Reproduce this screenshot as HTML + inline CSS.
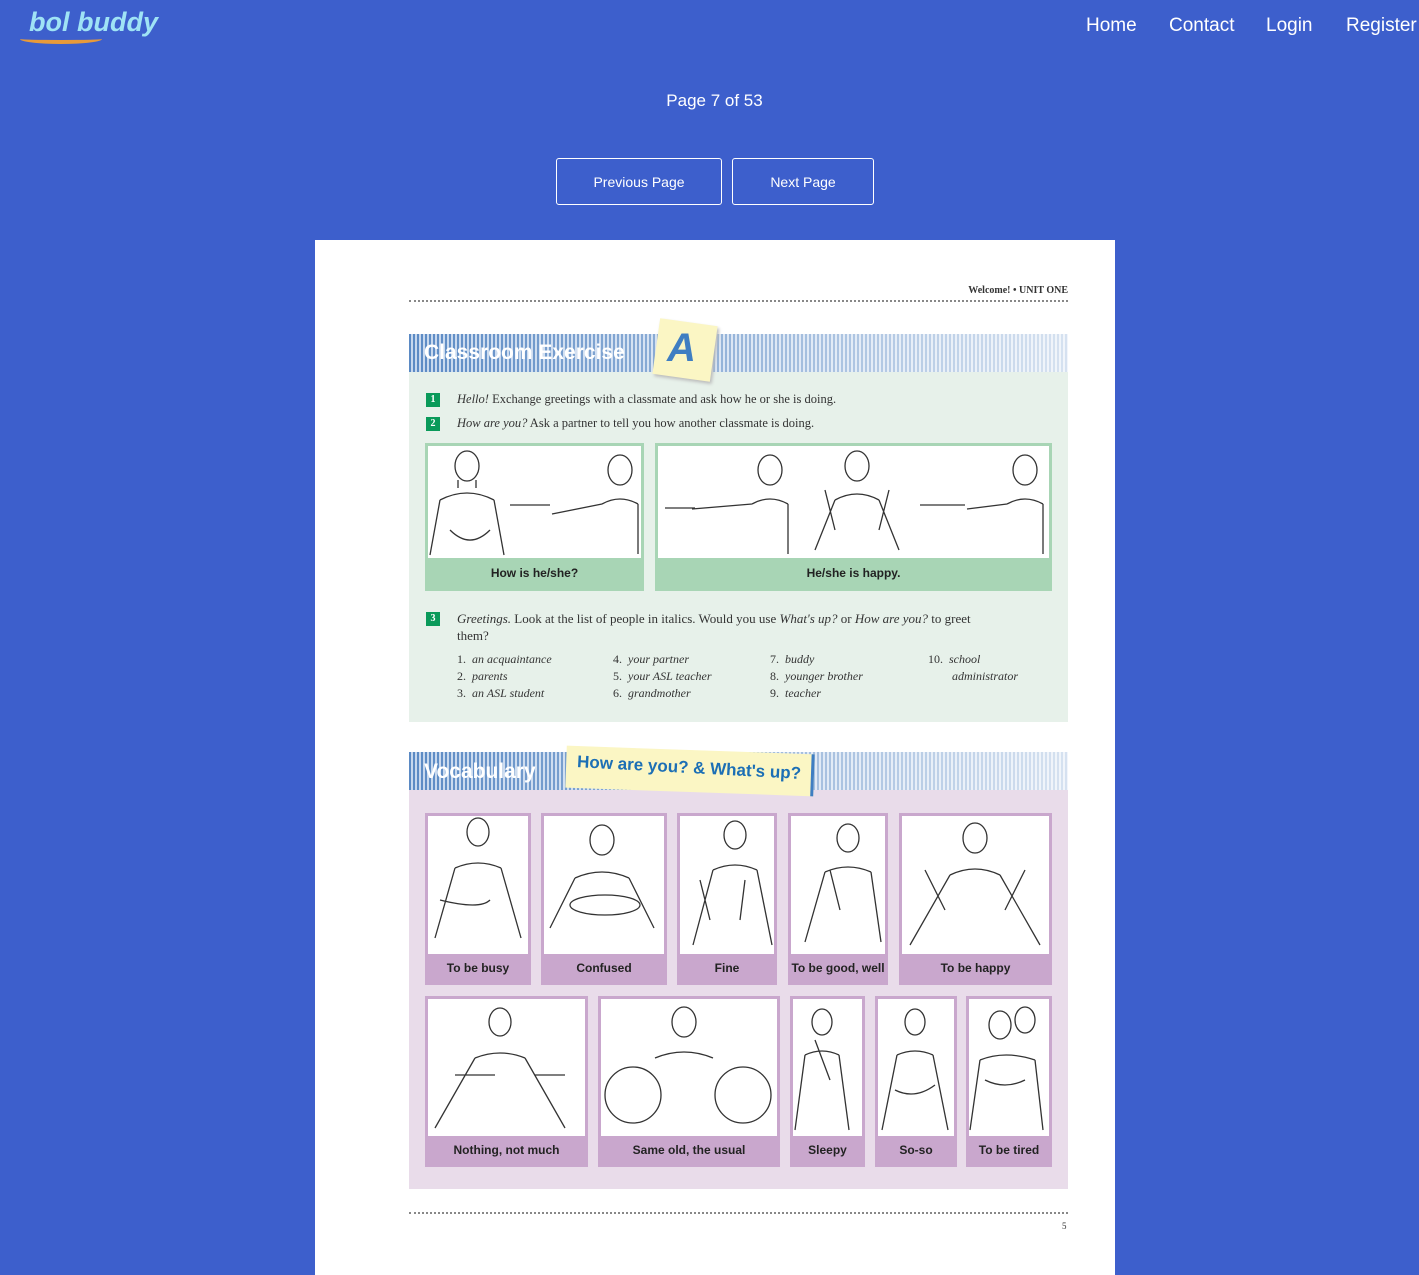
<!DOCTYPE html>
<html><head><meta charset="utf-8"><style>
*{margin:0;padding:0;box-sizing:border-box}
body{width:1419px;height:1275px;background:#3d5fcc;font-family:"Segoe UI","Liberation Sans",sans-serif;position:relative;overflow:hidden}
.a{position:absolute}
.nav a{color:#fff;font-size:19px;text-decoration:none;position:absolute;top:15px}
.btn{position:absolute;top:158px;height:47px;border:1px solid #fff;border-radius:3px;color:#fff;font-size:14px;display:flex;align-items:center;justify-content:center}
.page{left:315px;top:240px;width:800px;height:1035px;background:#fff}
.serif{font-family:"Liberation Serif",serif;color:#333}
.stripe{background:repeating-linear-gradient(90deg,#5b8ac4 0 2px,#c7d8ee 2px 4px)}
.stripe2{background:linear-gradient(90deg,rgba(255,255,255,0) 0,rgba(255,255,255,.75) 100%)}
.gp{position:absolute;border:3px solid #a8d5b5;background:#fff}
.gp .l{position:absolute;left:0;right:0;bottom:0;height:30px;background:#a8d5b5;font:bold 12px "Liberation Sans",sans-serif;color:#222;text-align:center;line-height:30px}
.pp{position:absolute;border:3px solid #c9a7cd;background:#fff}
.pp .l{position:absolute;left:0;right:0;bottom:0;height:28px;background:#c9a7cd;font:bold 12px "Liberation Sans",sans-serif;color:#222;text-align:center;line-height:28px;white-space:nowrap}
.num{display:inline-block;width:14px;height:14px;background:#0a9a5a;color:#fff;font:bold 10px "Liberation Serif",serif;text-align:center;line-height:14px;position:absolute;left:426px}
.t{font-size:12.5px;position:absolute}
svg{position:absolute;left:0;top:0}
</style></head><body>
<div class="a" style="left:29px;top:7px;font:italic bold 27px 'Liberation Sans',sans-serif;color:#9fe3f5">bol buddy</div>
<div class="a" style="left:20px;top:34px;width:82px;height:10px;border-bottom:4px solid #e89a3a;border-radius:0 0 50% 50%"></div>
<div class="nav"><a style="left:1086px">Home</a><a style="left:1169px">Contact</a><a style="left:1266px">Login</a><a style="left:1346px">Register</a></div>
<div class="a" style="left:0;width:1429px;top:91px;text-align:center;color:#fff;font-size:17px">Page 7 of 53</div>
<div class="btn" style="left:556px;width:166px">Previous Page</div>
<div class="btn" style="left:732px;width:142px">Next Page</div>
<div class="a page"></div>
<div class="a serif" style="left:900px;top:285px;width:168px;text-align:right;font-size:10px;font-weight:bold">Welcome! • UNIT ONE</div>
<div class="a" style="left:409px;top:300px;width:659px;border-top:2px dotted #888"></div>
<div class="a" style="left:409px;top:334px;width:659px;height:388px;background:#e7f1ea"></div>
<div class="a stripe" style="left:409px;top:334px;width:659px;height:38px"></div>
<div class="a stripe2" style="left:409px;top:334px;width:659px;height:38px"></div>
<div class="a" style="left:424px;top:341px;font:bold 21px 'Liberation Sans',sans-serif;color:#fff">Classroom Exercise</div>
<div class="a" style="left:656px;top:322px;width:58px;height:56px;background:#fbf6c4;transform:rotate(8deg);box-shadow:2px 2px 3px #bbb"></div>
<div class="a" style="left:667px;top:326px;font:italic bold 40px 'Liberation Sans',sans-serif;color:#3f7ec2">A</div>
<div class="num" style="top:393px">1</div><div class="num" style="top:417px">2</div><div class="num" style="top:612px">3</div>
<div class="t serif" style="left:457px;top:392px"><i>Hello!</i> Exchange greetings with a classmate and ask how he or she is doing.</div>
<div class="t serif" style="left:457px;top:416px"><i>How are you?</i> Ask a partner to tell you how another classmate is doing.</div>
<div class="gp" style="left:425px;top:443px;width:219px;height:148px"><div class="l">How is he/she?</div></div>
<div class="gp" style="left:655px;top:443px;width:397px;height:148px"><div class="l">He/she is happy.</div></div>
<div class="t serif" style="left:457px;top:610px;width:600px;line-height:17px;font-size:13px"><i>Greetings.</i> Look at the list of people in italics. Would you use <i>What's up?</i> or <i>How are you?</i> to greet<br>them?</div>
<div class="t serif" style="left:457px;top:651px;line-height:17px;font-size:12px">1.&nbsp; <i>an acquaintance</i><br>2.&nbsp; <i>parents</i><br>3.&nbsp; <i>an ASL student</i></div>
<div class="t serif" style="left:613px;top:651px;line-height:17px;font-size:12px">4.&nbsp; <i>your partner</i><br>5.&nbsp; <i>your ASL teacher</i><br>6.&nbsp; <i>grandmother</i></div>
<div class="t serif" style="left:770px;top:651px;line-height:17px;font-size:12px">7.&nbsp; <i>buddy</i><br>8.&nbsp; <i>younger brother</i><br>9.&nbsp; <i>teacher</i></div>
<div class="t serif" style="left:928px;top:651px;line-height:17px;font-size:12px">10.&nbsp; <i>school</i><br>&nbsp;&nbsp;&nbsp;&nbsp;&nbsp;&nbsp;&nbsp; <i>administrator</i></div>
<div class="a" style="left:409px;top:752px;width:659px;height:437px;background:#e9dcea"></div>
<div class="a stripe" style="left:409px;top:752px;width:659px;height:38px"></div>
<div class="a stripe2" style="left:409px;top:752px;width:659px;height:38px"></div>
<div class="a" style="left:424px;top:760px;font:bold 21px 'Liberation Sans',sans-serif;color:#fff">Vocabulary</div>
<div class="a" style="left:566px;top:750px;width:248px;height:42px;background:#fbf6c4;transform:rotate(2deg);border-right:3px solid #3f7ec2"></div>
<div class="a" style="left:577px;top:758px;font:bold 17px 'Liberation Sans',sans-serif;color:#1c6fb5;transform:rotate(3deg)">How are you? &amp; What's up?</div>
<div class="pp" style="left:425px;top:813px;width:106px;height:172px"><div class="l">To be busy</div></div>
<div class="pp" style="left:541px;top:813px;width:126px;height:172px"><div class="l">Confused</div></div>
<div class="pp" style="left:677px;top:813px;width:100px;height:172px"><div class="l">Fine</div></div>
<div class="pp" style="left:788px;top:813px;width:100px;height:172px"><div class="l">To be good, well</div></div>
<div class="pp" style="left:899px;top:813px;width:153px;height:172px"><div class="l">To be happy</div></div>
<div class="pp" style="left:425px;top:996px;width:163px;height:171px"><div class="l">Nothing, not much</div></div>
<div class="pp" style="left:598px;top:996px;width:182px;height:171px"><div class="l">Same old, the usual</div></div>
<div class="pp" style="left:790px;top:996px;width:75px;height:171px"><div class="l">Sleepy</div></div>
<div class="pp" style="left:875px;top:996px;width:82px;height:171px"><div class="l">So-so</div></div>
<div class="pp" style="left:966px;top:996px;width:86px;height:171px"><div class="l">To be tired</div></div>
<svg width="1419" height="1275" fill="none" stroke="#333" stroke-width="1.3">
<g>
<ellipse cx="467" cy="466" rx="12" ry="15"/><path d="M458 480v8M476 480v8M440 500q27-14 54 0M440 500l-10 55M494 500l10 55M450 530q20 20 40 0"/>
<ellipse cx="620" cy="470" rx="12" ry="15"/><path d="M602 504q18-10 36 0M602 504l-50 10M510 505h40M638 504v50"/>
<ellipse cx="770" cy="470" rx="12" ry="15"/><path d="M752 504q18-10 36 0M752 504l-60 5M665 508h30M788 504v50"/>
<ellipse cx="857" cy="466" rx="12" ry="15"/><path d="M835 500q22-12 44 0M835 500l-20 50M879 500l20 50M825 490l10 40M889 490l-10 40"/>
<ellipse cx="1025" cy="470" rx="12" ry="15"/><path d="M1007 504q18-10 36 0M1007 504l-40 5M920 505h45M1043 504v50"/>
<ellipse cx="478" cy="832" rx="11" ry="14"/><path d="M455 868q23-10 46 0M455 868l-20 70M501 868l20 70M440 900q40 10 50 0"/>
<ellipse cx="602" cy="840" rx="12" ry="15"/><path d="M575 878q27-12 54 0M570 905a35 10 0 1 0 70 0a35 10 0 1 0-70 0M575 878l-25 50M629 878l25 50"/>
<ellipse cx="735" cy="835" rx="11" ry="14"/><path d="M713 870q22-10 44 0M713 870l-20 75M757 870l15 75M700 880l10 40M745 880l-5 40"/>
<ellipse cx="848" cy="838" rx="11" ry="14"/><path d="M825 872q23-10 46 0M825 872l-20 70M871 872l10 70M830 870l10 40"/>
<ellipse cx="975" cy="838" rx="12" ry="15"/><path d="M950 875q25-12 50 0M950 875l-40 70M1000 875l40 70M925 870l20 40M1025 870l-20 40"/>
<ellipse cx="500" cy="1022" rx="11" ry="14"/><path d="M475 1058q25-10 50 0M475 1058l-40 70M525 1058l40 70M455 1075h40M535 1075h30"/>
<ellipse cx="684" cy="1022" rx="12" ry="15"/><path d="M655 1058q29-12 58 0M605 1095a28 28 0 1 0 56 0a28 28 0 1 0-56 0M715 1095a28 28 0 1 0 56 0a28 28 0 1 0-56 0"/>
<ellipse cx="822" cy="1022" rx="10" ry="13"/><path d="M805 1055q17-8 34 0M805 1055l-10 75M839 1055l10 75M815 1040l15 40"/>
<ellipse cx="915" cy="1022" rx="10" ry="13"/><path d="M897 1055q18-8 36 0M897 1055l-15 75M933 1055l15 75M895 1090q20 10 40 -5"/>
<ellipse cx="1000" cy="1025" rx="11" ry="14"/><ellipse cx="1025" cy="1020" rx="10" ry="13"/><path d="M980 1060q25-10 55 0M980 1060l-10 70M1035 1060l8 70M985 1080q20 10 40 0"/>
</g>
</svg>
<div class="a" style="left:409px;top:1212px;width:659px;border-top:2px dotted #888"></div>
<div class="a serif" style="left:1062px;top:1221px;font-size:9px">5</div>
</body></html>
